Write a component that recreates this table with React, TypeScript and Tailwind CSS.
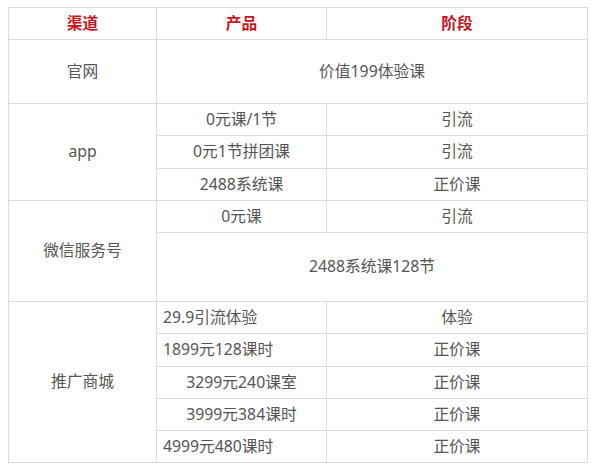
import React from "react";

const td = "border border-[#dcdcdc] text-center align-middle p-0";
const tdl = "border border-[#dcdcdc] text-left align-middle p-0 pl-[6px]";

export default function App() {
  return (
    <div
      className="w-[600px] h-[473px] bg-white pt-[7px] pl-[8px]"
      style={{ fontFamily: '"Noto Sans", "Noto Sans CJK SC", sans-serif' }}
    >
      <table className="border-collapse w-[579px] table-fixed text-[15.75px] text-[#555555] leading-none">
        <colgroup>
          <col className="w-[148px]" />
          <col className="w-[170px]" />
          <col className="w-[261px]" />
        </colgroup>
        <tbody>
          <tr className="h-[32px]">
            <td className={`${td} text-[#c8161d] font-semibold`}>渠道</td>
            <td className={`${td} text-[#c8161d] font-semibold`}>产品</td>
            <td className={`${td} text-[#c8161d] font-semibold`}>阶段</td>
          </tr>
          <tr className="h-[64px]">
            <td className={td}>官网</td>
            <td className={td} colSpan={2}>价值199体验课</td>
          </tr>
          <tr className="h-[32px]">
            <td className={td} rowSpan={3}>app</td>
            <td className={td}>0元课/1节</td>
            <td className={td}>引流</td>
          </tr>
          <tr className="h-[33px]">
            <td className={td}>0元1节拼团课</td>
            <td className={td}>引流</td>
          </tr>
          <tr className="h-[32px]">
            <td className={td}>2488系统课</td>
            <td className={td}>正价课</td>
          </tr>
          <tr className="h-[32px]">
            <td className={td} rowSpan={2}>微信服务号</td>
            <td className={td}>0元课</td>
            <td className={td}>引流</td>
          </tr>
          <tr className="h-[69px]">
            <td className={td} colSpan={2}>2488系统课128节</td>
          </tr>
          <tr className="h-[32px]">
            <td className={td} rowSpan={5}>推广商城</td>
            <td className={tdl}>29.9引流体验</td>
            <td className={td}>体验</td>
          </tr>
          <tr className="h-[33px]">
            <td className={tdl}>1899元128课时</td>
            <td className={td}>正价课</td>
          </tr>
          <tr className="h-[32px]">
            <td className={td}>3299元240课室</td>
            <td className={td}>正价课</td>
          </tr>
          <tr className="h-[32px]">
            <td className={td}>3999元384课时</td>
            <td className={td}>正价课</td>
          </tr>
          <tr className="h-[32px]">
            <td className={tdl}>4999元480课时</td>
            <td className={td}>正价课</td>
          </tr>
        </tbody>
      </table>
    </div>
  );
}
